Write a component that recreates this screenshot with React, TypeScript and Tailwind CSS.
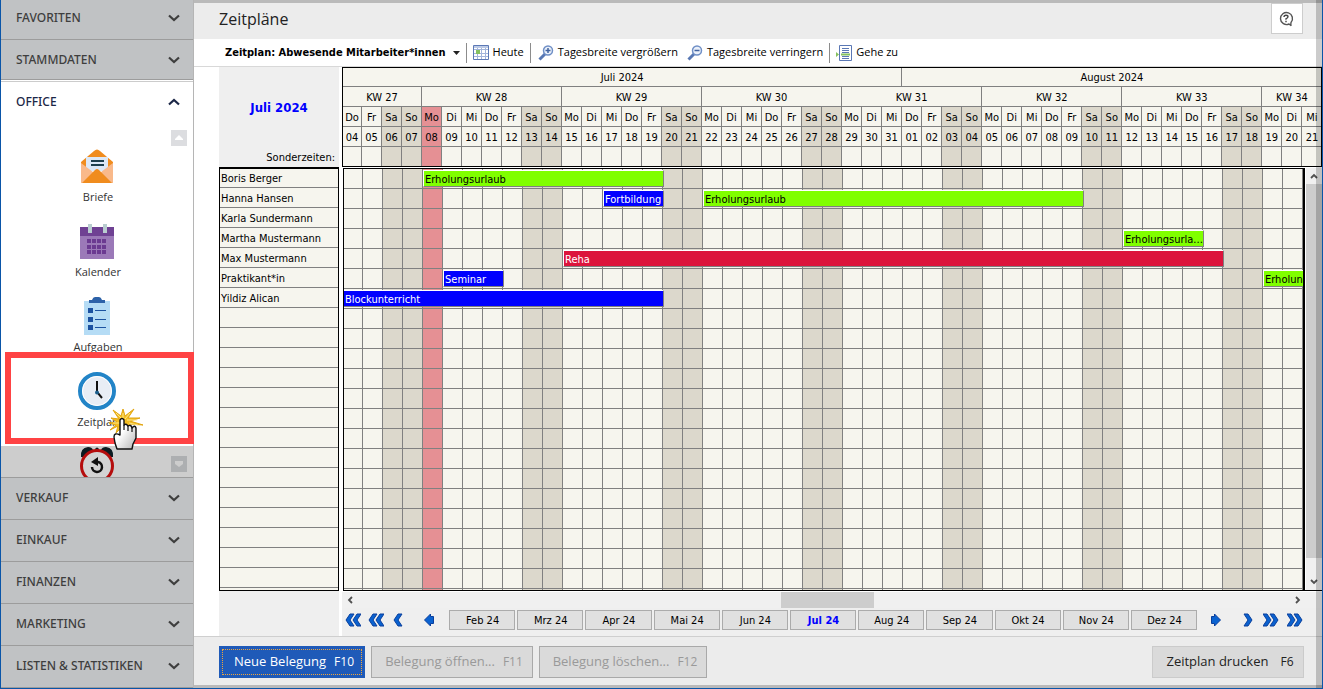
import { Fragment } from 'react'
import type { ReactNode } from 'react'
import clsx from 'clsx'

const WEEKDAYS = ['Mo', 'Di', 'Mi', 'Do', 'Fr', 'Sa', 'So']

type Day = { name: string; date: string; weekend: boolean; today: boolean }

// 4 July to 21 August 2024
const days: Day[] = Array.from({ length: 49 }, (_, i) => {
  const name = WEEKDAYS[(i + 3) % 7]
  const number = i < 28 ? i + 4 : i - 27
  return {
    name,
    date: String(number).padStart(2, '0'),
    weekend: name === 'Sa' || name === 'So',
    today: i === 4,
  }
})

const weeks = [
  { label: 'KW 27', span: 4 },
  { label: 'KW 28', span: 7 },
  { label: 'KW 29', span: 7 },
  { label: 'KW 30', span: 7 },
  { label: 'KW 31', span: 7 },
  { label: 'KW 32', span: 7 },
  { label: 'KW 33', span: 7 },
  { label: 'KW 34', span: 3 },
]

type Booking = { label: string; start: number; span: number; color: string }

const GREEN = 'bg-[#80ff00] text-black'
const BLUE = 'bg-[#0000ff] text-white'
const RED = 'bg-[#dc143c] text-white'

const employees: { name: string; bookings: Booking[] }[] = [
  {
    name: 'Boris Berger',
    bookings: [{ label: 'Erholungsurlaub', start: 5, span: 12, color: GREEN }],
  },
  {
    name: 'Hanna Hansen',
    bookings: [
      { label: 'Fortbildung', start: 14, span: 3, color: BLUE },
      { label: 'Erholungsurlaub', start: 19, span: 19, color: GREEN },
    ],
  },
  { name: 'Karla Sundermann', bookings: [] },
  {
    name: 'Martha Mustermann',
    bookings: [{ label: 'Erholungsurla...', start: 40, span: 4, color: GREEN }],
  },
  {
    name: 'Max Mustermann',
    bookings: [{ label: 'Reha', start: 12, span: 33, color: RED }],
  },
  {
    name: 'Praktikant*in',
    bookings: [
      { label: 'Seminar', start: 6, span: 3, color: BLUE },
      { label: 'Erholungsurlaub', start: 47, span: 3, color: GREEN },
    ],
  },
  {
    name: 'Yildiz Alican',
    bookings: [{ label: 'Blockunterricht', start: 1, span: 16, color: BLUE }],
  },
]

const rows = [
  ...employees,
  ...Array.from({ length: 15 }, () => ({ name: '', bookings: [] as Booking[] })),
]

const months = [
  'Feb 24',
  'Mrz 24',
  'Apr 24',
  'Mai 24',
  'Jun 24',
  'Jul 24',
  'Aug 24',
  'Sep 24',
  'Okt 24',
  'Nov 24',
  'Dez 24',
]

const dayColor = (day: Day) =>
  day.today ? 'bg-[#e59094]' : day.weekend ? 'bg-[#dcd8cc]' : 'bg-[#f6f5ee]'

const Chevron = ({ up = false }: { up?: boolean }) => (
  <svg width="12" height="8" viewBox="0 0 12 8" aria-hidden="true">
    <path
      d={up ? 'M1 6.5 6 2l5 4.5' : 'M1 1.5 6 6l5-4.5'}
      fill="none"
      stroke="currentColor"
      strokeWidth="2.2"
    />
  </svg>
)

const LetterIcon = () => (
  <svg width="32" height="34" viewBox="0 0 32 34" aria-hidden="true">
    <path d="M0 13 13 2q3-3 6 0l13 11v6H0z" fill="#f08c1e" />
    <path d="M5 8h22v14H5z" fill="#dce8f7" />
    <path d="M0 14v20h32V14L16 26z" fill="#f9b98a" />
    <path d="M1 34 14 21q2-2 4 0l13 13z" fill="#f08c1e" />
    <path d="M10 12h13M10 16h13" stroke="#1d3f4e" strokeWidth="2" />
  </svg>
)

const CalendarIcon = () => (
  <svg width="34" height="35" viewBox="0 0 34 35" aria-hidden="true">
    <path d="M0 3h34v32H0z" fill="#9b79b8" />
    <path d="M0 3h34v9H0z" fill="#6f4193" />
    <path d="M8 0h4v9H8zM23 0h4v9h-4z" fill="#b9cdd0" />
    {[15, 21, 26].map((y) =>
      [7, 12, 17, 22].map((x) => (
        <path key={`${x}-${y}`} d={`M${x} ${y}h4v4h-4z`} fill="#6b3a91" />
      ))
    )}
  </svg>
)

const TasksIcon = () => (
  <svg width="26" height="38" viewBox="0 0 26 38" aria-hidden="true">
    <path d="M0 4h26v34H0z" fill="#b5dcf5" />
    <path d="M5 6V3h3q1-3 3-3h4q2 0 3 3h3v3z" fill="#2d62a8" />
    {[11, 20, 28].map((y) => (
      <Fragment key={y}>
        <path d={`M4 ${y}h5v5H4z`} fill="#1b52a0" />
        <path d={`M11 ${y + 2}h11v1H11z`} fill="#1b52a0" />
      </Fragment>
    ))}
  </svg>
)

const ClockIcon = () => (
  <svg width="38" height="38" viewBox="0 0 38 38" aria-hidden="true">
    <circle cx="19" cy="19" r="17" fill="#e8edf5" stroke="#2284c7" strokeWidth="4" />
    <circle cx="19" cy="19" r="14.500" fill="none" stroke="#fff" />
    <path d="M19 9v11l5 6" fill="none" stroke="#111" strokeWidth="2" />
    <circle cx="19" cy="20.500" r="2" fill="#1d5f8d" />
  </svg>
)

const AlarmIcon = () => (
  <svg width="34" height="38" viewBox="0 0 34 38" aria-hidden="true">
    <path
      d="M1 11Q0 2 8 1q4 0 5 3L4 11zM33 11q1-9-7-10-4 0-5 3l9 7zM15 3q2-3 4 0v3h-4z"
      fill="#0c1c22"
    />
    <circle cx="17" cy="20" r="15.500" fill="#d3d3d3" stroke="#b50d0d" strokeWidth="3" />
    <path d="M16 16h2a5 5 0 1 1-6 5" fill="none" stroke="#111" strokeWidth="2.500" />
    <path d="m11 16 7-5v9z" fill="#111" />
  </svg>
)

const HandCursor = () => (
  <svg width="36" height="46" viewBox="0 0 36 46" aria-hidden="true">
    <defs>
      <linearGradient id="hand" x1="0" y1="0" x2="1" y2="1">
        <stop offset="0.4" stopColor="#fff" />
        <stop offset="1" stopColor="#b4b4b4" />
      </linearGradient>
    </defs>
    <path
      d="m4 4 8 6 2-7 2 7 9-7-6 9 12 0-10 3 13 4-14-1 5 7-8-5-4 1-6 6 2-7-8 4 6-5-7-2 8-1-6-4 8 1z"
      fill="#f3bd22"
      stroke="#e2a612"
    />
    <path d="m7 7 6 6M14 7v5M21 7l-5 6M18 14h10M4 17h8M20 17l9 2" stroke="#ffe782" />
    <path
      d="M8 43h15l1-5 3-6V22q-1-3-3-1l-1 1q-1-4-4-2-2-3-4-1v-5q-2-3-4 0v15q-6-3-6 2l1 6z"
      fill="url(#hand)"
      stroke="#111"
      strokeWidth="1.400"
      strokeLinejoin="round"
    />
    <path d="M15 19v5M19 20v5M23 22v4" stroke="#111" strokeWidth="1.200" />
  </svg>
)

const GridIcon = () => (
  <svg width="16" height="16" viewBox="0 0 16 16" aria-hidden="true">
    <path d="M.5.5h15v14H.5z" fill="#fff" stroke="#5b78b5" />
    <path
      d="M4.500 1v13M8.500 1v13M12.500 1v13M1 4.500h14M1 8.500h14M1 11.500h14"
      stroke="#a3b5db"
    />
    <path d="M3 5h4v4H3z" fill="#86c160" />
    <path d="M1 1h14v2H1z" fill="#bccae6" />
  </svg>
)

const LensIcon = ({ plus = false }: { plus?: boolean }) => (
  <svg width="16" height="16" viewBox="0 0 16 16" aria-hidden="true">
    <path d="M7 9 1.500 14.500" stroke="#5878b4" strokeWidth="3" />
    <circle cx="10" cy="5.500" r="4.500" fill="#eaf0fa" stroke="#6f8fc6" strokeWidth="1.500" />
    <path d={plus ? 'M7.500 5.500h5M10 3v5' : 'M7.500 5.500h5'} stroke="#42639f" strokeWidth="1.500" />
  </svg>
)

const GotoIcon = () => (
  <svg width="16" height="16" viewBox="0 0 16 16" aria-hidden="true">
    <path d="M3.500.5h12v15h-12z" fill="#fff" stroke="#5b78b5" />
    <path d="M6 3.500h7M6 5.500h7M6 7.500h7M6 11.500h7M6 13.500h7" stroke="#5b78b5" />
    <path d="M5 8.500h9v2H5zM0 7l3 2.500L0 12z" fill="#86c160" />
  </svg>
)

const HelpIcon = () => (
  <svg width="16" height="16" viewBox="0 0 16 16" aria-hidden="true">
    <path
      d="M11 13a6 6 0 1 1 2-1.500q-.5 1.700.2 3.200z"
      fill="none"
      stroke="#555"
      strokeWidth="1.400"
    />
    <path
      d="M6 6q0-1.800 2-1.800t2 1.600q0 1-2 2v1M8 9.800v1.400"
      fill="none"
      stroke="#444"
      strokeWidth="1.400"
    />
  </svg>
)

const BlueChevrons = ({ double = false, right = false }) => (
  <svg
    width={double ? 16 : 10}
    height="14"
    viewBox={double ? '0 0 16 14' : '0 0 10 14'}
    className={right ? 'rotate-180' : ''}
    aria-hidden="true"
  >
    {(double ? [0, 7] : [0]).map((x) => (
      <path
        key={x}
        d={`M${x + 5} 1h4L${x + 5} 7l4 6h-4L${x + 1} 7z`}
        fill="#0a62d0"
        stroke="#0a3f9c"
      />
    ))}
  </svg>
)

const BlueArrow = ({ right = false }) => (
  <svg
    width="10"
    height="14"
    viewBox="0 0 10 14"
    className={right ? 'rotate-180' : ''}
    aria-hidden="true"
  >
    <path d="M.5 7 6.500 1v2.500h3v7h-3V13z" fill="#0a62d0" stroke="#0a3f9c" />
  </svg>
)

const ScrollArrow = ({ className }: { className?: string }) => (
  <svg width="8" height="8" viewBox="0 0 8 8" className={className} aria-hidden="true">
    <path d="m1 6 3-3 3 3" fill="none" stroke="#505050" strokeWidth="1.800" />
  </svg>
)

const SectionButton = ({ label, className }: { label: string; className: string }) => (
  <button
    type="button"
    className={clsx(
      "flex w-full shrink-0 items-center justify-between border-b border-[#9c9c9c] bg-[#c0c2c4] pr-[13px] pl-[15px] font-['Noto_Sans','Open_Sans',sans-serif] text-xs font-medium text-[#3e3e3e]",
      className
    )}
  >
    {label}
    <Chevron />
  </button>
)

const NavItem = ({ label, children }: { label: string; children: ReactNode }) => (
  <a
    href="#"
    className="flex h-[75px] shrink-0 flex-col items-center text-[11px] text-[#333]"
  >
    <span className="flex h-[38px] items-center">{children}</span>
    <span className="mt-1 pl-[2px] leading-4">{label}</span>
  </a>
)

const Sidebar = () => (
  <nav className="relative flex w-[193px] shrink-0 flex-col border-r border-[#b5b5b5] bg-white">
    <SectionButton label="FAVORITEN" className="h-10 pb-1" />
    <SectionButton label="STAMMDATEN" className="h-10" />
    <section className="flex min-h-0 flex-1 flex-col overflow-hidden border-b border-[#9c9c9c]">
      <button
        type="button"
        className="mt-px flex h-[41px] shrink-0 items-center justify-between border-t border-[#ccc] pr-[13px] pl-[15px] font-['Noto_Sans','Open_Sans',sans-serif] text-xs font-medium text-[#1c2747]"
      >
        OFFICE
        <Chevron up />
      </button>
      <button
        type="button"
        aria-label="Nach oben"
        className="mt-2 mr-[6px] flex size-4 shrink-0 items-center justify-center self-end bg-[#dcdde0]"
      >
        <svg width="8" height="6" viewBox="0 0 8 6" aria-hidden="true">
          <path d="M0 5V4l4-4 4 4v1z" fill="#fff" />
        </svg>
      </button>
      <div className="mt-px flex flex-col">
        <NavItem label="Briefe">
          <LetterIcon />
        </NavItem>
        <NavItem label="Kalender">
          <CalendarIcon />
        </NavItem>
        <NavItem label="Aufgaben">
          <TasksIcon />
        </NavItem>
        <NavItem label="Zeitplan">
          <ClockIcon />
        </NavItem>
      </div>
      <div className="relative -mt-px flex min-h-0 flex-1 justify-center overflow-hidden bg-[#cdcdcd]">
        <AlarmIcon />
        <button
          type="button"
          aria-label="Nach unten"
          className="absolute top-[10px] right-[6px] flex size-4 items-center justify-center bg-[#adafb1]"
        >
          <svg width="8" height="6" viewBox="0 0 8 6" aria-hidden="true">
            <path d="M0 0h8v3L4 6 0 3z" fill="#cdcdcd" />
          </svg>
        </button>
      </div>
    </section>
    <SectionButton label="VERKAUF" className="h-[42px] pb-[2px]" />
    <SectionButton label="EINKAUF" className="h-[42px] pb-[2px]" />
    <SectionButton label="FINANZEN" className="h-[42px] pb-[2px]" />
    <SectionButton label="MARKETING" className="h-[42px] pb-[2px]" />
    <SectionButton label="LISTEN & STATISTIKEN" className="h-[42px] pb-[2px]" />
    <div className="pointer-events-none absolute top-[352px] -right-px left-1 h-[92px] border-[6px] border-[#ff4344]" />
    <div className="pointer-events-none absolute top-[406px] left-[108px]">
      <HandCursor />
    </div>
  </nav>
)

const Separator = () => <span className="h-5 w-px bg-[#8c8c8c]" />

const Toolbar = () => (
  <div className="flex h-7 shrink-0 items-center border-b border-[#d8d8d8] bg-white pl-[31px] text-[11px] text-black">
    <button
      type="button"
      className="mr-[6px] flex items-center gap-[7px] pt-px font-['DejaVu_Sans_Condensed','DejaVu_Sans',sans-serif] font-bold"
    >
      Zeitplan: Abwesende Mitarbeiter*innen
      <svg width="7" height="4" viewBox="0 0 7 4" aria-hidden="true">
        <path d="M0 0h7L3.500 4z" fill="#222" />
      </svg>
    </button>
    <Separator />
    <button type="button" className="mx-[6px] flex items-center gap-1">
      <GridIcon />
      Heute
    </button>
    <Separator />
    <button type="button" className="ml-[7px] flex items-center gap-1">
      <LensIcon plus />
      Tagesbreite vergrößern
    </button>
    <button type="button" className="mr-[6px] ml-[9px] flex items-center gap-1">
      <LensIcon />
      Tagesbreite verringern
    </button>
    <Separator />
    <button type="button" className="ml-[6px] flex items-center gap-1">
      <GotoIcon />
      Gehe zu
    </button>
  </div>
)

const NameColumn = () => (
  <div className="flex w-[120px] shrink-0 flex-col">
    <div className="flex h-[100px] shrink-0 flex-col items-center bg-[#efefef] pt-[33px]">
      <h2 className="text-[13px] leading-4 font-bold text-[#0000ff]">Juli 2024</h2>
      <span className="mt-auto mb-px self-end pr-1 leading-4">Sonderzeiten:</span>
    </div>
    <ul className="min-h-0 flex-1 overflow-hidden border border-t-2 border-black bg-[#f6f5ee]">
      {rows.map((row, i) => (
        <li
          key={i}
          className="h-5 border-b border-[#808080] pt-px pl-px leading-[19px] first:h-[19px] first:leading-[18px]"
        >
          {row.name}
        </li>
      ))}
    </ul>
    <div className="h-[45px] shrink-0 bg-[#efefef]" />
  </div>
)

const cell = 'border-r border-b border-[#808080] px-0 pt-[2px] pb-0 text-center font-normal'

const CalendarHeader = () => (
  <div className="h-[100px] shrink-0 overflow-hidden border border-black bg-[#f6f5ee]">
    <table className="w-[979px] table-fixed border-separate border-spacing-0">
      <colgroup>
        {days.map((_, i) => (
          <col key={i} className={i === 0 ? 'w-[19px]' : 'w-5'} />
        ))}
      </colgroup>
      <thead>
        <tr className="h-[19px] leading-4">
          <th colSpan={28} className={cell}>
            Juli 2024
          </th>
          <th colSpan={21} className={cell}>
            August 2024
          </th>
        </tr>
        <tr className="h-5 leading-[17px]">
          {weeks.map((week) => (
            <th key={week.label} colSpan={week.span} className={cell}>
              {week.label}
            </th>
          ))}
        </tr>
        <tr className="h-5 leading-[17px]">
          {days.map((day, i) => (
            <th key={i} className={clsx(cell, dayColor(day))}>
              {day.name}
            </th>
          ))}
        </tr>
        <tr className="h-5 leading-[17px]">
          {days.map((day, i) => (
            <th key={i} className={clsx(cell, dayColor(day))}>
              {day.date}
            </th>
          ))}
        </tr>
      </thead>
      <tbody>
        <tr className="h-5">
          {days.map((day, i) => (
            <td key={i} className={clsx(cell, dayColor(day))} />
          ))}
        </tr>
      </tbody>
    </table>
  </div>
)

const ScheduleRow = ({ bookings }: { bookings: Booking[] }) => (
  <div className="grid h-5 w-[979px] grid-cols-[19px_repeat(48,20px)] grid-rows-[20px]">
    {days.map((day, i) => (
      <span
        key={i}
        className={clsx('border-r border-b border-[#808080]', dayColor(day))}
        style={{ gridColumn: i + 1, gridRow: 1 }}
      />
    ))}
    {bookings.map((booking) => (
      <span
        key={booking.start}
        className={clsx(
          '-mr-px mt-px h-[17px] overflow-hidden border-y border-r border-t-white border-r-[#808080] border-b-[#808080] pl-px leading-[17px] whitespace-nowrap',
          booking.start > 1 && 'border-l border-l-white',
          booking.color
        )}
        style={{ gridColumn: `${booking.start} / span ${booking.span}`, gridRow: 1 }}
      >
        {booking.label}
      </span>
    ))}
  </div>
)

const MonthNav = () => (
  <div className="flex h-7 shrink-0 items-center bg-[#efefef] pr-[19px] pb-1 pl-[3px]">
    <div className="flex w-[104px] shrink-0 items-center">
      <button type="button" aria-label="Zwei Jahre zurück">
        <BlueChevrons double />
      </button>
      <button type="button" aria-label="Jahr zurück" className="ml-[7px]">
        <BlueChevrons double />
      </button>
      <button type="button" aria-label="Monat zurück" className="ml-[9px]">
        <BlueChevrons />
      </button>
      <button type="button" aria-label="Tag zurück" className="ml-[21px]">
        <BlueArrow />
      </button>
    </div>
    <div className="flex flex-1 gap-[2px]">
      {months.map((month) => (
        <button
          key={month}
          type="button"
          className={clsx(
            'h-5 flex-1 border border-[#ababab] bg-[#e0e0e0] pt-[2px] pl-px leading-4',
            month === 'Jul 24' && 'font-bold text-[#0000ff]'
          )}
        >
          {month}
        </button>
      ))}
    </div>
    <div className="flex w-[106px] shrink-0 items-center justify-end">
      <button type="button" aria-label="Tag vor" className="mr-[22px]">
        <BlueArrow right />
      </button>
      <button type="button" aria-label="Monat vor" className="mr-[10px]">
        <BlueChevrons right />
      </button>
      <button type="button" aria-label="Jahr vor" className="mr-2">
        <BlueChevrons double right />
      </button>
      <button type="button" aria-label="Zwei Jahre vor">
        <BlueChevrons double right />
      </button>
    </div>
  </div>
)

const Schedule = () => (
  <div className="ml-[3px] flex min-w-0 flex-1 flex-col">
    <CalendarHeader />
    <div className="mt-px ml-px flex min-h-0 flex-1 border-b border-black">
      <div className="min-w-0 flex-1 overflow-hidden border-t border-r-2 border-l border-black">
        {rows.map((row, i) => (
          <ScheduleRow key={i} bookings={row.bookings} />
        ))}
      </div>
      <div className="ml-px flex w-4 shrink-0 flex-col items-center bg-[#f0f0f0]">
        <ScrollArrow className="my-1 shrink-0" />
        <span className="w-full flex-1 bg-[#cdcdcd]" />
        <ScrollArrow className="mt-5 mb-1 shrink-0 rotate-180" />
      </div>
    </div>
    <div className="mt-px flex h-4 shrink-0 items-center bg-[#f0f0f0] pr-5 pl-1">
      <ScrollArrow className="-rotate-90" />
      <span className="mr-auto ml-[44.7%] h-4 w-[93px] bg-[#cdcdcd]" />
      <ScrollArrow className="rotate-90" />
    </div>
    <MonthNav />
  </div>
)

const Footer = () => (
  <footer className="flex h-[49px] shrink-0 items-center gap-[6px] border-t border-[#cfcfcf] bg-[#ececec] pt-px pr-[18px] pl-[25px] text-[13px] font-medium">
    <button type="button" className="h-8 w-[146px] bg-[#1f5ab8] p-[3px] text-white">
      <span className="flex h-full items-center justify-center gap-2 border border-dotted border-[#f0a53a] pt-px pl-1">
        Neue Belegung <span className="text-xs font-normal">F10</span>
      </span>
    </button>
    <button
      type="button"
      disabled
      className="flex h-8 w-[162px] items-center justify-center gap-2 border border-[#a9a9a9] bg-[#dadada] pt-px pl-1 text-[#999]"
    >
      Belegung öffnen... <span className="text-xs font-normal">F11</span>
    </button>
    <button
      type="button"
      disabled
      className="flex h-8 w-[168px] items-center justify-center gap-2 border border-[#a9a9a9] bg-[#dadada] pt-px pl-1 text-[#999]"
    >
      Belegung löschen... <span className="text-xs font-normal">F12</span>
    </button>
    <button
      type="button"
      className="ml-auto flex h-8 w-[152px] items-center justify-center gap-3 border border-[#cbcbcb] bg-[#dadada] pt-px pl-1 text-[#222]"
    >
      Zeitplan drucken <span className="text-xs font-normal">F6</span>
    </button>
  </footer>
)

const App = () => {
  return (
    <div className="relative flex h-screen overflow-hidden border-x border-b border-[#0a55a8] bg-white font-['Open_Sans','Noto_Sans',sans-serif]">
      <Sidebar />
      <main className="flex min-w-0 flex-1 flex-col border-t-[3px] border-b-[3px] border-[#bababa]">
        <header className="flex h-9 shrink-0 items-start justify-between bg-[#ececec] pr-[19px] pl-[25px]">
          <h1 className="pt-1 text-base leading-6 font-medium text-[#222]">Zeitpläne</h1>
          <button
            type="button"
            aria-label="Hilfe"
            className="flex h-[31px] w-8 items-center justify-center border border-[#cdcdcd] bg-white pr-[2px]"
          >
            <HelpIcon />
          </button>
        </header>
        <Toolbar />
        <div className="flex min-h-0 flex-1 pl-[25px] font-['DejaVu_Sans_Condensed','DejaVu_Sans',sans-serif] text-[11px] text-black">
          <NameColumn />
          <Schedule />
        </div>
        <Footer />
      </main>
      <div className="pointer-events-none absolute top-0 right-0 bottom-0 w-[6px] bg-black/20" />
    </div>
  )
}

export default App
